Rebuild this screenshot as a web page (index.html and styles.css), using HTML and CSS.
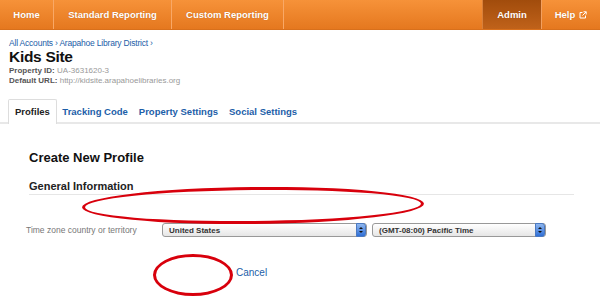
FILE: index.html
```html
<!DOCTYPE html>
<html lang="en">
<head>
  <meta charset="UTF-8">
  <title>Create New Profile</title>
  <link rel="stylesheet" href="styles.css">
</head>
<body>
  <div class="topnav">
    <a class="nav-item home">Home</a>
    <a class="nav-item standard">Standard Reporting</a>
    <a class="nav-item custom">Custom Reporting</a>
    <span class="nav-spacer"></span>
    <a class="nav-item admin">Admin</a>
    <a class="nav-item help">Help
      <svg width="8" height="8" viewBox="0 0 8 8"><path d="M3.5 1.5H1v5.5h5.5V4.5" fill="none" stroke="#fff" stroke-width="1"/><path d="M4.5 0.8H7.2V3.5M7.2 0.8L3.5 4.5" fill="none" stroke="#fff" stroke-width="1"/></svg>
    </a>
  </div>

  <div class="header">
    <div class="crumbs">All Accounts › Arapahoe Library District ›</div>
    <h1>Kids Site</h1>
    <div class="meta"><b>Property ID:</b> UA-3631620-3</div>
    <div class="meta"><b>Default URL:</b> http://kidsite.arapahoelibraries.org</div>
  </div>

  <div class="tabs">
    <span class="tab active">Profiles</span>
    <span class="tab">Tracking Code</span>
    <span class="tab">Property Settings</span>
    <span class="tab">Social Settings</span>
  </div>

  <div class="content">
    <h2>Create New Profile</h2>
    <h3>General Information</h3>
    <div class="form-row">
      <span class="label">Time zone country or territory</span>
      <span class="select country">United States<i class="arrows"></i></span>
      <span class="select zone">(GMT-08:00) Pacific Time<i class="arrows"></i></span>
    </div>
    <div class="actions">
      <a class="cancel">Cancel</a>
    </div>
  </div>

  <span class="mark mark-wide"></span>
  <span class="mark mark-small"></span>
</body>
</html>
```

FILE: styles.css
```css
body {
  margin: 0;
  font-family: "Liberation Sans", Arial, sans-serif;
  background: #fff;
  color: #222;
  overflow: hidden;
}

.topnav {
  display: flex;
  height: 29px;
  background: linear-gradient(#f69239, #e5781f);
  border-bottom: 1px solid #d8701c;
}

.nav-item {
  display: flex;
  align-items: center;
  justify-content: center;
  gap: 4px;
  color: #fff;
  font-weight: bold;
  font-size: 9.5px;
  border-right: 1px solid #f9a866;
  text-shadow: 0 0 1px rgba(120, 50, 0, 0.4);
}

.nav-item.home {
  width: 53px;
}

.nav-item.standard {
  width: 117px;
}

.nav-item.custom {
  width: 111px;
}

.nav-spacer {
  flex: 1;
}

.nav-item.admin {
  width: 58px;
  background: linear-gradient(#a14c0c, #c0621a);
  border-left: 1px solid #d8803a;
  border-right: 1px solid #f2a060;
}

.nav-item.help {
  width: 58px;
  border-right: none;
}

.header {
  padding: 8px 9px 0;
}

.crumbs {
  color: #1c5ea8;
  font-size: 8.5px;
  letter-spacing: -0.2px;
}

h1 {
  margin: 0;
  font-size: 15.5px;
  line-height: 18px;
  letter-spacing: -0.3px;
  color: #111;
}

.meta {
  font-size: 8px;
  color: #999;
  line-height: 10px;
}

.meta b {
  color: #555;
}

.tabs {
  display: flex;
  align-items: flex-end;
  margin-top: 14px;
  padding-left: 8px;
  border-bottom: 2px solid #e8e8e8;
  height: 22px;
}

.tab {
  padding: 0 5.5px 5px;
  font-size: 9.5px;
  font-weight: bold;
  color: #1c5ea8;
}

.tab.active {
  color: #222;
  border: 1px solid #ddd;
  border-bottom: none;
  background: #fff;
  border-radius: 2px 2px 0 0;
  padding: 6px 6px 7px;
  margin-bottom: -2px;
}

.content {
  padding: 26px 26px 0 29px;
}

h2 {
  margin: 0;
  font-size: 13px;
  color: #111;
}

h3 {
  margin: 15px 0 0;
  font-size: 11px;
  color: #222;
  padding-bottom: 2px;
  border-bottom: 1px solid #e6e6e6;
}

.form-row {
  display: flex;
  align-items: center;
  margin: 28px 0 0 -3px;
}

.label {
  font-size: 8.5px;
  color: #777;
  width: 136px;
}

.select {
  position: relative;
  display: flex;
  align-items: center;
  height: 12px;
  padding-left: 6px;
  font-size: 8px;
  font-weight: bold;
  color: #333;
  border: 1px solid #999;
  border-radius: 3px;
  background: linear-gradient(#fff, #e6e6e6);
}

.select.country {
  width: 197px;
}

.select.zone {
  margin-left: 5px;
  width: 166px;
}

.arrows {
  position: absolute;
  right: 0;
  top: -1px;
  width: 10px;
  height: 14px;
  border-radius: 0 3px 3px 0;
  background: linear-gradient(#8fb7ef, #2f6fd6);
  border: 1px solid #4a79c2;
  box-sizing: border-box;
}

.arrows::before,
.arrows::after {
  content: "";
  position: absolute;
  left: 2px;
  border-left: 2px solid transparent;
  border-right: 2px solid transparent;
}

.arrows::before {
  top: 3px;
  border-bottom: 2px solid #111;
}

.arrows::after {
  bottom: 3px;
  border-top: 2px solid #111;
}

.actions {
  margin: 25px 0 0 207px;
}

.cancel {
  font-size: 10px;
  color: #1c5ea8;
}

.mark {
  position: absolute;
  border: 3px solid #d8000c;
  border-radius: 50%;
  pointer-events: none;
}

.mark-wide {
  left: 82px;
  top: 187px;
  width: 336px;
  height: 31px;
  transform: rotate(-0.6deg);
}

.mark-small {
  left: 153px;
  top: 254px;
  width: 74px;
  height: 36px;
}
```
